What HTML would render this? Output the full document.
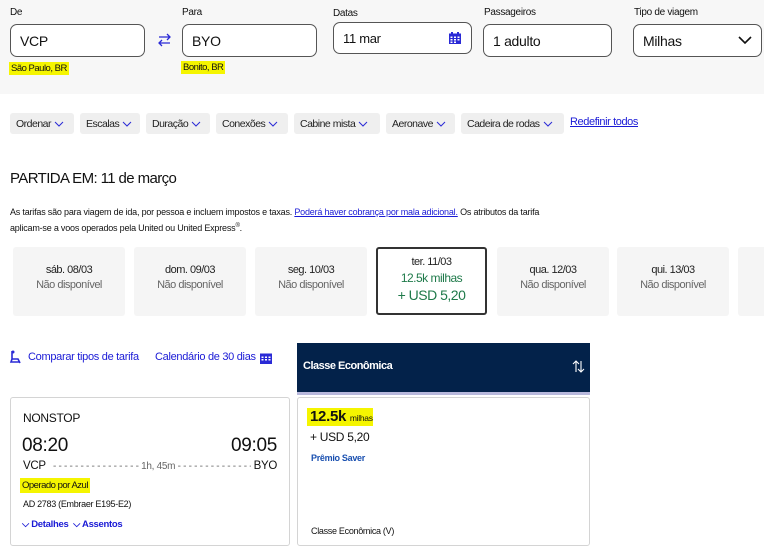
<!DOCTYPE html>
<html><head><meta charset="utf-8"><style>
*{box-sizing:border-box;margin:0;padding:0}
body{width:764px;height:554px;overflow:hidden;background:#fff;font-family:"Liberation Sans",sans-serif;color:#111;position:relative;letter-spacing:-0.3px}
.a{position:absolute;white-space:nowrap}
.hdr{left:0;top:0;width:764px;height:94px;background:#f7f7f7}
.lbl{font-size:10px;color:#111}
.inp{border:1px solid #555;border-radius:7px;background:#fff;font-size:14px;padding-left:9px;display:flex;align-items:center}
.hl{background:#f5f500;font-size:9.5px;padding:1px 2px;letter-spacing:-0.5px}
.chip{background:#efefef;border-radius:3px;height:21px;top:113px;font-size:10.5px;letter-spacing:-0.5px;padding:0 6px;display:flex;align-items:center;color:#222}
.chip svg{margin-left:3px}
.card{top:247px;width:112px;height:69px;background:#f5f5f5;border-radius:3px;text-align:center;font-size:11px;letter-spacing:-0.5px}
.card .d{margin-top:17px;color:#222}
.card .n{color:#666;margin-top:3px}
a{color:#1a1ad6}
</style></head><body>
<div class="a hdr"></div>
<div class="a lbl" style="left:10px;top:7px">De</div>
<div class="a lbl" style="left:182px;top:7px">Para</div>
<div class="a lbl" style="left:333px;top:8px">Datas</div>
<div class="a lbl" style="left:484px;top:7px">Passageiros</div>
<div class="a lbl" style="left:634px;top:7px">Tipo de viagem</div>
<div class="a inp" style="left:10px;top:24px;width:135px;height:33px">VCP</div>
<div class="a inp" style="left:182px;top:24px;width:135px;height:33px">BYO</div>
<div class="a inp" style="left:333px;top:22px;width:139px;height:32px;font-size:13px">11 mar
<svg class="a" style="right:10px;top:9px" width="12" height="12" viewBox="0 0 12 12"><rect x="0" y="1.5" width="12" height="10.5" fill="#2a2ad6"/><rect x="2" y="0" width="2" height="3" fill="#2a2ad6"/><rect x="8" y="0" width="2" height="3" fill="#2a2ad6"/><g fill="#fff"><rect x="1.5" y="4.5" width="2" height="1.5"/><rect x="5" y="4.5" width="2" height="1.5"/><rect x="8.5" y="4.5" width="2" height="1.5"/><rect x="1.5" y="7" width="2" height="1.5"/><rect x="5" y="7" width="2" height="1.5"/><rect x="8.5" y="7" width="2" height="1.5"/><rect x="1.5" y="9.5" width="2" height="1.5"/><rect x="5" y="9.5" width="2" height="1.5"/></g></svg></div>
<div class="a inp" style="left:483px;top:24px;width:129px;height:33px">1 adulto</div>
<div class="a inp" style="left:633px;top:24px;width:129px;height:33px">Milhas
<svg class="a" style="right:9px;top:11px" width="14" height="9" viewBox="0 0 14 9"><path d="M1 1l6 6 6-6" fill="none" stroke="#111" stroke-width="1.6"/></svg></div>
<svg class="a" style="left:157px;top:33px" width="15" height="14" viewBox="0 0 15 14"><path d="M2 4h11M10 1l3 3-3 3M13 10H2M5 7l-3 3 3 3" fill="none" stroke="#2a2ad6" stroke-width="1.3"/></svg>
<div class="a hl" style="left:9px;top:62px">São Paulo, BR</div>
<div class="a hl" style="left:181px;top:61px">Bonito, BR</div>

<div class="a chip" style="left:10px;width:64px">Ordenar<svg width="10" height="6" viewBox="0 0 10 6"><path d="M1 1l4 4 4-4" fill="none" stroke="#2a2ad6"/></svg></div>
<div class="a chip" style="left:80px;width:60px">Escalas<svg width="10" height="6" viewBox="0 0 10 6"><path d="M1 1l4 4 4-4" fill="none" stroke="#2a2ad6"/></svg></div>
<div class="a chip" style="left:146px;width:64px">Duração<svg width="10" height="6" viewBox="0 0 10 6"><path d="M1 1l4 4 4-4" fill="none" stroke="#2a2ad6"/></svg></div>
<div class="a chip" style="left:216px;width:72px">Conexões<svg width="10" height="6" viewBox="0 0 10 6"><path d="M1 1l4 4 4-4" fill="none" stroke="#2a2ad6"/></svg></div>
<div class="a chip" style="left:294px;width:86px">Cabine mista<svg width="10" height="6" viewBox="0 0 10 6"><path d="M1 1l4 4 4-4" fill="none" stroke="#2a2ad6"/></svg></div>
<div class="a chip" style="left:386px;width:69px">Aeronave<svg width="10" height="6" viewBox="0 0 10 6"><path d="M1 1l4 4 4-4" fill="none" stroke="#2a2ad6"/></svg></div>
<div class="a chip" style="left:461px;width:103px">Cadeira de rodas<svg width="10" height="6" viewBox="0 0 10 6"><path d="M1 1l4 4 4-4" fill="none" stroke="#2a2ad6"/></svg></div>
<a class="a" style="left:570px;top:116px;font-size:11px;letter-spacing:-0.4px;text-decoration:underline">Redefinir todos</a>

<div class="a" style="left:10px;top:170px;font-size:15px;letter-spacing:-0.6px">PARTIDA EM: 11 de março</div>
<div class="a" style="left:10px;top:205px;font-size:9px;line-height:14px;letter-spacing:-0.2px">As tarifas são para viagem de ida, por pessoa e incluem impostos e taxas. <a style="text-decoration:underline">Poderá haver cobrança por mala adicional.</a> Os atributos da tarifa<br>aplicam-se a voos operados pela United ou United Express<sup style="font-size:6px">®</sup>.</div>

<div class="a card" style="left:13px"><div class="d">sáb. 08/03</div><div class="n">Não disponível</div></div>
<div class="a card" style="left:134px"><div class="d">dom. 09/03</div><div class="n">Não disponível</div></div>
<div class="a card" style="left:255px"><div class="d">seg. 10/03</div><div class="n">Não disponível</div></div>
<div class="a card" style="left:376px;background:#fff;border:2px solid #333;width:111px;height:68px"><div style="margin-top:7px;color:#222">ter. 11/03</div><div style="color:#1f7a4a;font-size:12px;margin-top:3px">12.5k milhas</div><div style="color:#1f7a4a;font-size:14px;margin-top:2px">+ USD 5,20</div></div>
<div class="a card" style="left:497px"><div class="d">qua. 12/03</div><div class="n">Não disponível</div></div>
<div class="a card" style="left:617px"><div class="d">qui. 13/03</div><div class="n">Não disponível</div></div>
<div class="a card" style="left:738px;width:40px"></div>

<svg class="a" style="left:9px;top:350px" width="14" height="14" viewBox="0 0 14 14"><path d="M3 1v8h6l2 4M3 9l-1 3h9" fill="none" stroke="#2a2ad6" stroke-width="1.6"/><circle cx="4" cy="2" r="1.5" fill="#2a2ad6"/></svg>
<div class="a" style="left:28px;top:351px;font-size:11px;color:#1a1ad6">Comparar tipos de tarifa</div>
<div class="a" style="left:155px;top:351px;font-size:11px;color:#1a1ad6">Calendário de 30 dias</div>
<svg class="a" style="left:260px;top:352px" width="12" height="12" viewBox="0 0 12 12"><rect x="0" y="1.5" width="12" height="10.5" fill="#2a2ad6"/><g fill="#fff"><rect x="1.5" y="4.5" width="2" height="1.5"/><rect x="5" y="4.5" width="2" height="1.5"/><rect x="8.5" y="4.5" width="2" height="1.5"/><rect x="1.5" y="7" width="2" height="1.5"/><rect x="5" y="7" width="2" height="1.5"/><rect x="8.5" y="7" width="2" height="1.5"/></g></svg>

<div class="a" style="left:297px;top:343px;width:293px;height:52px;background:#03224a;border-bottom:3px solid #b8b8dc"></div>
<div class="a" style="left:303px;top:360px;font-size:11px;color:#fff;font-weight:bold;letter-spacing:-0.5px">Classe Econômica</div>
<svg class="a" style="left:572px;top:360px" width="13" height="13" viewBox="0 0 13 13"><path d="M4 12V1M1 4l3-3 3 3M9 1v11M6 9l3 3 3-3" fill="none" stroke="#fff" stroke-width="1.1"/></svg>

<div class="a" style="left:10px;top:397px;width:280px;height:149px;border:1px solid #d4d4d4;border-radius:3px"></div>
<div class="a" style="left:23px;top:411px;font-size:12px">NONSTOP</div>
<div class="a" style="left:22px;top:435px;font-size:19px">08:20</div>
<div class="a" style="right:487px;top:435px;font-size:19px">09:05</div>
<div class="a" style="left:23px;top:460px;font-size:11.5px">VCP</div>
<div class="a" style="left:53px;top:461px;font-size:10px;color:#666;letter-spacing:-0.3px">- - - - - - - - - - - - - - - -  1h, 45m  - - - - - - - - - - - - - - - -</div>
<div class="a" style="right:487px;top:460px;font-size:11.5px;background:#fff;padding-left:3px">BYO</div>
<div class="a hl" style="left:20px;top:478px;font-size:9.5px;padding:2px 2px">Operado por Azul</div>
<div class="a" style="left:23px;top:499px;font-size:9px">AD 2783 (Embraer E195-E2)</div>
<div class="a" style="left:22px;top:519px;font-size:9.5px;color:#1a1ad6;font-weight:bold">⌵ Detalhes &nbsp;⌵ Assentos</div>

<div class="a" style="left:297px;top:397px;width:293px;height:149px;border:1px solid #d4d4d4;border-radius:3px"></div>
<div class="a" style="left:307px;top:408px;background:#f5f500;padding:0 4px;width:66px;height:18px"></div>
<div class="a" style="left:310px;top:408px;font-size:15px;font-weight:bold">12.5k <span style="font-size:8.5px;font-weight:normal">milhas</span></div>
<div class="a" style="left:310px;top:430px;font-size:12px">+ USD 5,20</div>
<div class="a" style="left:311px;top:453px;font-size:9px;color:#1a50b0;font-weight:bold">Prêmio Saver</div>
<div class="a" style="left:311px;top:526px;font-size:9px">Classe Econômica (V)</div>
</body></html>
